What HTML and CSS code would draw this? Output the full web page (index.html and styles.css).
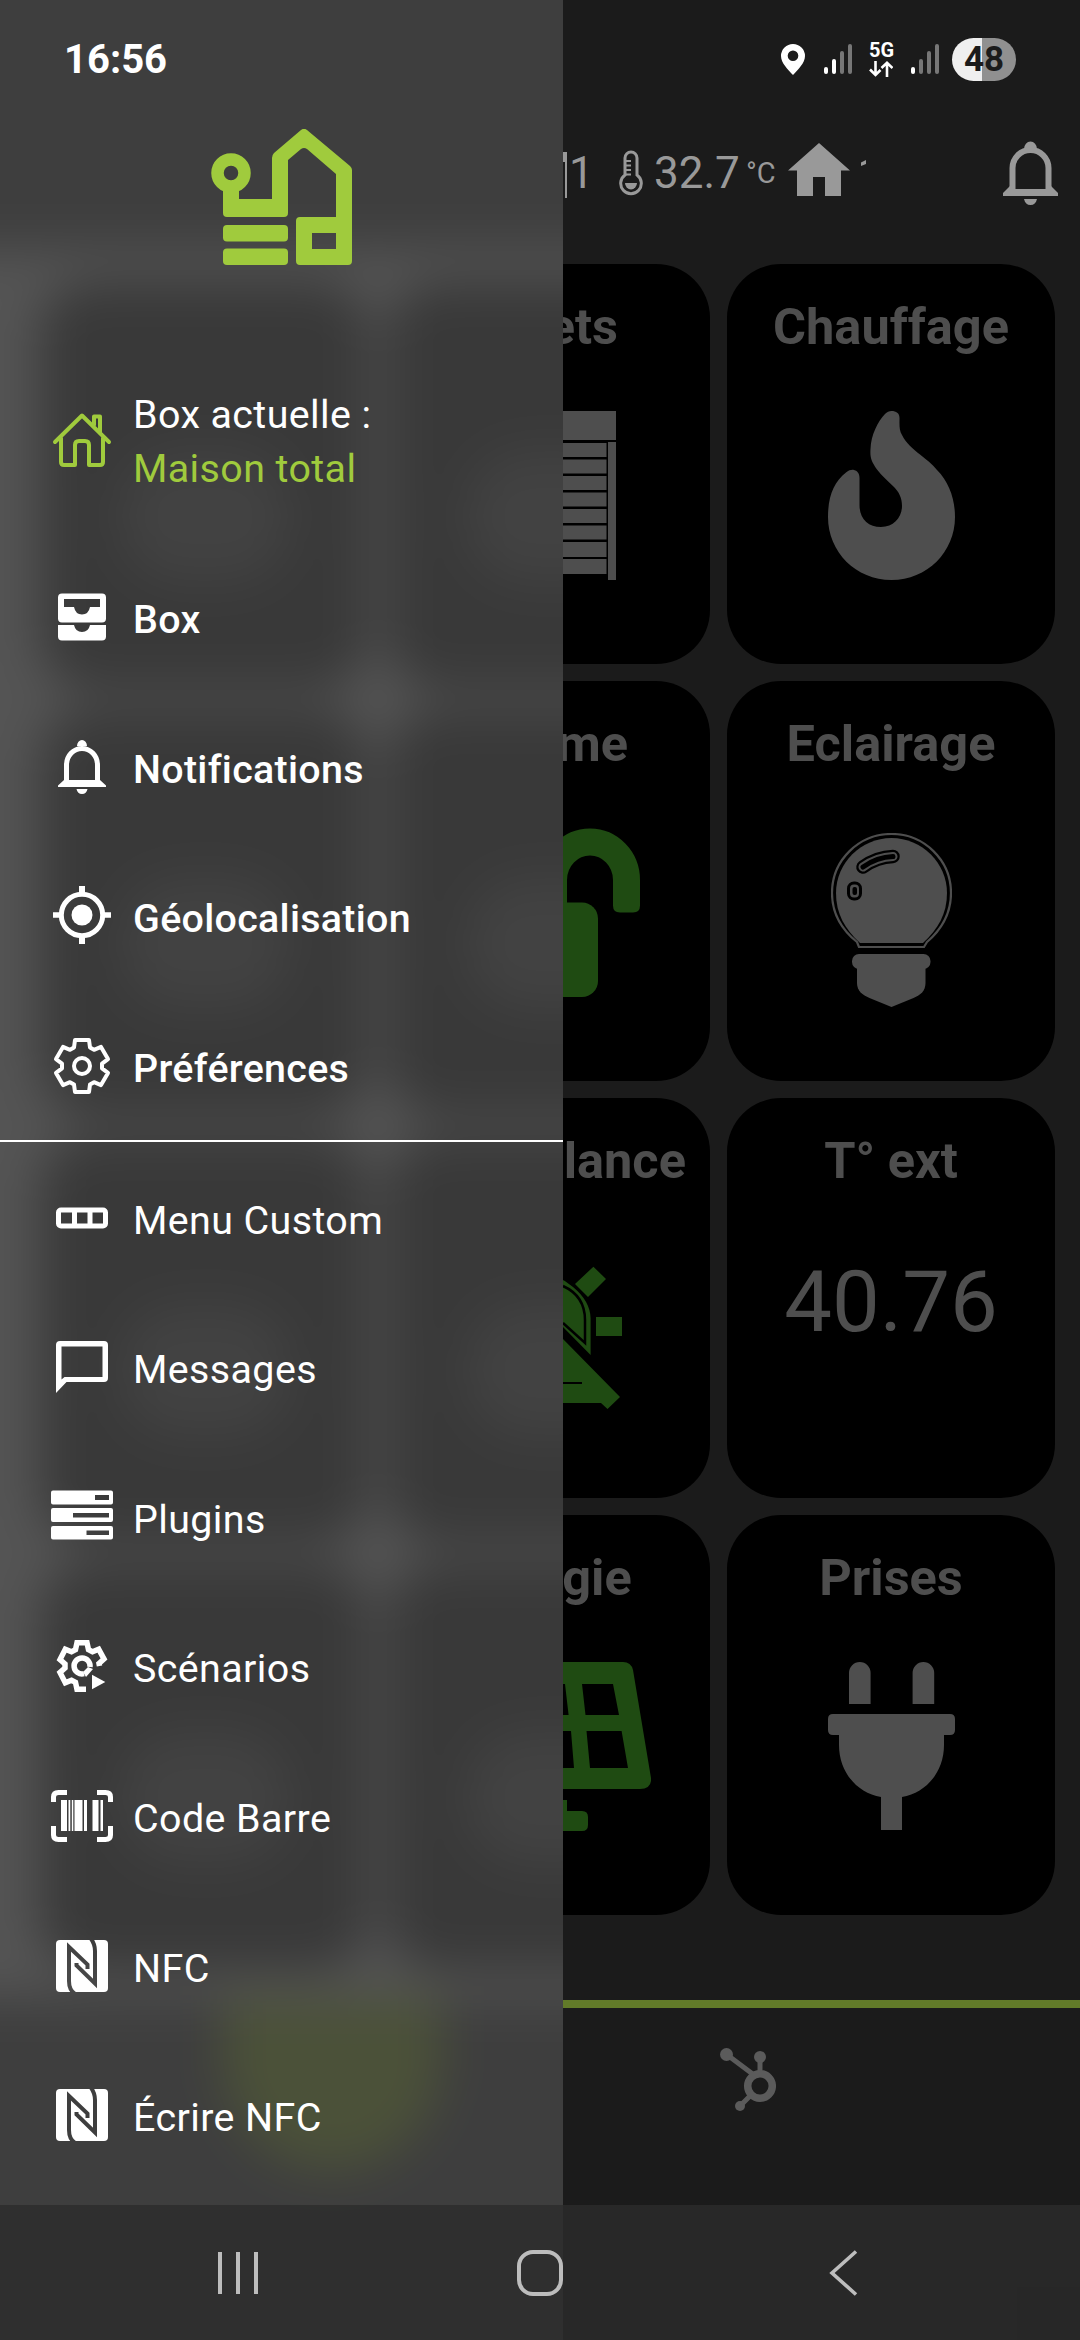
FILE: index.html
```html
<!DOCTYPE html>
<html lang="fr">
<head>
<meta charset="utf-8">
<title>Maison total</title>
<link rel="stylesheet" href="styles.css">
</head>
<body>
<div class="phone">
  <main class="dashboard">
    <header class="topbar">
      <svg class="top-shutter" width="67" height="50" viewBox="0 0 67 50"><path d="M0 2h67v10H0zM65 12h2v36h-2z"/></svg>
      <span class="top-count">1</span>
      <svg class="top-thermo" width="24" height="46" viewBox="0 0 24 46"><path d="M6 25V8a6 6 0 0 1 12 0v17a10.300 10.300 0 1 1-12 0z" fill="none" stroke="currentColor" stroke-width="3"/><path d="M6 11h6M6 15.500h6M6 20h6M6 24.500h6" stroke="currentColor" stroke-width="1.800"/><path d="M6 33h12a6 6.500 0 0 1-12 0z"/></svg>
      <span class="top-temp">32.7</span>
      <span class="top-unit">°C</span>
      <svg class="top-home" width="62" height="53" viewBox="0 0 62 53"><path d="M31 0l31 27.500h-9V53H37V34H25v19H9V27.500H0z"/></svg>
      <svg class="top-mark" width="6" height="6" viewBox="0 0 6 6"><path d="M0 2.500L5 0v4L0 6z"/></svg>
      <svg class="top-bell" width="55" height="64" viewBox="0 0 55 64"><path d="M9.500 49V27a18 18 0 0 1 36 0v22" fill="none" stroke="currentColor" stroke-width="6"/><path d="M21 8a6.500 7.500 0 0 1 13 0zM0 52l8-8 2 4h35l2-4 8 8v3H0zM21 58h13c-1 4-3 6-6.500 6s-5.500-2-6.500-6z"/></svg>
    </header>
    <section class="tiles">
      <article class="tile"></article>
      <article class="tile"><h2>Volets</h2>
        <svg class="tile-icon" width="140" height="169" viewBox="476 412 140 169"><path d="M476 412h140v29H476zM476 443h8v138h-8zM608 443h8v138h-8zM486 444h120.500v14H486zM486 460.500h120.500v14H486zM486 477h120.500v14H486zM486 493.500h120.500v14H486zM486 510h120.500v14H486zM486 526.500h120.500v14H486zM486 543h120.500v15H486zM486 560h120.500v15H486z"/></svg></article>
      <article class="tile"><h2>Chauffage</h2>
        <svg class="tile-icon" width="127" height="169" viewBox="827 411 127 169"><path d="M890.600 411C895 411 898.500 413 898.500 418C898.500 425 898 430 901 435C905 443 912 449 919 454.500C926 460 931 464 936 470C948 482 954 499 954 517C954 552 926 580 890.600 580C855 580 827 552 827 517C827 496 833 482 845 472.500C848 470 851 469.500 853 470C857 471 858.500 474 858.500 478V505C858.500 519 867 527 880 527C893 527 901 517 901 506C901 498 898 492 893 487C887 481 881 476 876 469.500C870 461 869 457 869.500 449C870 435 877 421 884 414C886 412 888 411 890.600 411Z"/></svg></article>

      <article class="tile"></article>
      <article class="tile"><h2>Alarme</h2>
        <svg class="tile-icon on lock" width="188" height="169" viewBox="452 828 188 169"><path d="M553.500 903V880a36.500 38 0 0 1 73 0v20" fill="none" stroke="currentColor" stroke-width="27"/><path d="M613 895h27v10.500q0 7-7 7h-13q-7 0-7-7z"/><rect x="452" y="902.500" width="146" height="94.500" rx="16"/></svg></article>
      <article class="tile"><h2>Eclairage</h2>
        <svg class="tile-icon bulb" width="121" height="174" viewBox="830 833 121 174"><path d="M858 947L856 942C840 929 831 914 831 893C831 860 858 834 890.500 834S950 860 950 893C950 914 941 929 926 942L923 947Z" fill="none" stroke="currentColor" stroke-width="2.200"/><path d="M859 943C844 929 835 914 835 893C835 863 860 838 890.500 838S946 863 946 893C946 914 937 929 922 943Z"/><path d="M862 867Q876 857 892 856.500" fill="none" stroke="#000" stroke-width="13.500" stroke-linecap="round"/><path d="M862 867Q876 857 892 856.500" fill="none" stroke="currentColor" stroke-width="9" stroke-linecap="round"/><path d="M862 867Q876 857 892 856.500" fill="none" stroke="#000" stroke-width="5" stroke-linecap="round"/><rect x="847.500" y="883" width="12" height="16" rx="5.500" fill="currentColor" stroke="#000" stroke-width="3"/><rect x="851.500" y="887" width="4.500" height="8" rx="2" fill="#000"/><rect x="851" y="954" width="78.500" height="15" rx="7"/><path d="M856 960h68.500v23c0 8-5 12-12 15l-22 9-22-9c-7-3-12.500-7-12.500-15z"/></svg></article>

      <article class="tile"></article>
      <article class="tile"><h2>Surveillance</h2>
        <svg class="tile-icon on siren" width="152" height="144" viewBox="470 1266 152 144"><path d="M593.400 1266.700l12.600 12.300-18 18-13-13zM596 1317h26v19h-26zM470 1317h26v19h-26zM498.600 1266.700l-12.600 12.300 18 18 13-13z"/><path d="M563 1339l57 58-12.500 12-6.500-6H502v-30h30l-62-60 14-14 62 63z"/><path d="M515 1283q31-20 58 4q17 14 17.600 31v37L563 1327z"/><path d="M563 1286q22 10 22 34v23l-22-20" fill="none" stroke="#000" stroke-width="2.500"/><path d="M563 1383h19" stroke="#000" stroke-width="2"/></svg></article>
      <article class="tile"><h2>T° ext</h2><p class="reading">40.76</p></article>

      <article class="tile"></article>
      <article class="tile"><h2>Energie</h2>
        <svg class="tile-icon on solar" width="210" height="169" viewBox="441 1662 210 169"><path fill-rule="evenodd" d="M470 1662h153q8 0 10 8l18 108q1 11-11 11H452q-12 0-11-11l18-108q2-8 11-8zM582 1684l3.500 31H619l-6-31zM586.500 1731l3.500 37h38l-6.400-37zM527 1684l-3.600 31h45.200l-3.600-31zM521 1731l-3 37h56l-3-37zM510 1684h-31l-6 31h34zM505.500 1731H470l-6 37h38z"/><path d="M525 1800h42v11h15q6 0 6 6v8q0 6-6 6h-72q-6 0-6-6v-8q0-6 6-6h15z"/></svg></article>
      <article class="tile"><h2>Prises</h2>
        <svg class="tile-icon" width="127" height="168" viewBox="827 1663 127 168"><path d="M848 1705v-31a10.800 11 0 0 1 21.600 0v31zM911.600 1705v-31a10.800 11 0 0 1 21.600 0v31zM832 1715h117q5 0 5 5v11q0 5-5 5h-6v10c0 27-18 48-42 52v33h-21v-33c-24-4-42-25-42-52v-10h-6q-5 0-5-5v-11q0-5 5-5z"/></svg></article>
    </section>
    <footer class="tabbar">
      <svg width="56" height="64" viewBox="0 0 56 64"><path d="M6 6l28 21M40 9v17M32 46L20 58" stroke="currentColor" stroke-width="5"/><circle cx="6.500" cy="6.500" r="6.500"/><circle cx="40" cy="9" r="6"/><circle cx="20" cy="58" r="5"/><circle cx="40" cy="38" r="12.300" fill="none" stroke="currentColor" stroke-width="7.500"/></svg>
    </footer>
  </main>

  <aside class="drawer">
    <div class="haze">
      <div class="haze-head"></div>
      <div class="haze-tiles"><i></i><i></i><i></i><i></i><i></i><i></i><i></i><i></i></div>
      <div class="haze-foot"><b></b></div>
    </div>
    <div class="menu">
      <svg class="logo" width="141" height="136" viewBox="211 129 141 136"><path d="M231 159.500a13.500 13.500 0 1 1 0 27a13.500 13.500 0 1 1 0-27z" fill="none" stroke="currentColor" stroke-width="12.500"/><path d="M223 188h16v11h33v-41q0-3 2-5l27-23q3-2.500 6 0l43 36q2 2 2 4v91q0 4-4 4h-48q-4 0-4-4v-40q0-4 4-4h36v-43l-29-25q-3-2-6 0l-13 11v53q0 4-4 4h-57q-4 0-4-4zM312 233v16h24v-16z" fill-rule="evenodd"/><rect x="223" y="225" width="65" height="16.500" rx="4"/><rect x="223" y="248.500" width="65" height="16.500" rx="4"/></svg>
      <div class="current">
        <svg width="60" height="60" viewBox="52 410 60 60" fill="none" stroke="currentColor" stroke-width="4" stroke-linecap="round" stroke-linejoin="round"><path d="M55 442L82 415.500L109 442M61 438v24q0 3 3 3h11v-20q0-4 4-4h6q4 0 4 4v20h11q3 0 3-3v-24M94 425v-8.500h6V432"/></svg>
        <p>Box actuelle :<br><span class="box-name">Maison total</span></p>
      </div>
      <nav class="group strong">
        <a class="item"><svg width="64" height="64" viewBox="50 584.500 64 64"><path fill-rule="evenodd" d="M62 593h40q4 0 4 4v21q0 4-4 4H62q-4 0-4-4v-21q0-4 4-4zM64 598.500v8h10q1.500 7.500 8 7.500t8-7.500h10v-8z"/><path d="M58 624.500h16q1.500 7 8 7t8-7h16V636q0 4-4 4H62q-4 0-4-4z"/></svg><span>Box</span></a>
        <a class="item"><svg width="64" height="64" viewBox="50 736 64 64"><path d="M66.500 784v-18a15.500 16.500 0 0 1 31 0v18" fill="none" stroke="currentColor" stroke-width="5"/><path d="M77 747a5 6 0 0 1 10 0zM58 786.500l6-5.500h36l6 5.500v1.500H58zM76.500 790h11q-1 5-5.500 5t-5.500-5z"/></svg><span>Notifications</span></a>
        <a class="item"><svg width="64" height="64" viewBox="50 885 64 64"><path d="M79 887h6v8h-6zM79 937h6v8h-6zM53 913.200h8v5.600h-8zM103 913.200h8v5.600h-8z"/><circle cx="82" cy="916" r="20.700" fill="none" stroke="currentColor" stroke-width="5"/><circle cx="82" cy="916" r="10.500"/></svg><span>Géolocalisation</span></a>
        <a class="item"><svg width="64" height="64" viewBox="-32 -32 64 64" fill="none" stroke="currentColor" stroke-width="4" stroke-linejoin="round"><path d="M-7-26L7-26L8-18.500L12-16.200L19-19.100L26-6.900L20-2.300L20 2.300L26 6.900L19 19.100L12 16.200L8 18.500L7 26L-7 26L-8 18.500L-12 16.200L-19 19.100L-26 6.900L-20 2.300L-20-2.300L-26-6.900L-19-19.100L-12-16.200L-8-18.500Z"/><circle r="8"/></svg><span>Préférences</span></a>
      </nav>
      <hr class="divider">
      <nav class="group">
        <a class="item"><svg width="64" height="64" viewBox="50 1185.500 64 64" fill="none" stroke="currentColor" stroke-width="5"><rect x="58.500" y="1209.500" width="47" height="16" rx="2.500"/><path d="M74.500 1209v17M90 1209v17"/></svg><span>Menu Custom</span></a>
        <a class="item"><svg width="64" height="64" viewBox="50 1336 64 64"><path fill-rule="evenodd" d="M60 1342h44q4 0 4 4v33q0 4-4 4H66.500L56 1394v-48q0-4 4-4zM61.500 1347.500v33l3-2.500h38v-30.500z"/></svg><span>Messages</span></a>
        <a class="item"><svg width="64" height="64" viewBox="50 1484.500 64 64"><path fill-rule="evenodd" d="M53 1490h58q2 0 2 2v10q0 2-2 2H53q-2 0-2-2v-10q0-2 2-2zM95 1494.500v5h14v-5zM53 1507.500h58q2 0 2 2v10q0 2-2 2H53q-2 0-2-2v-10q0-2 2-2zM73 1512.500v4.500h36v-4.500zM53 1525.500h58q2 0 2 2v9.500q0 2-2 2H53q-2 0-2-2v-9.500q0-2 2-2zM86.500 1530v4.500H109v-4.500z"/></svg><span>Plugins</span></a>
        <a class="item"><svg width="64" height="64" viewBox="-32 -32 64 64"><g fill="none" stroke="currentColor" stroke-width="5.500"><path d="M4 23.300L-5 23.300L-6.500 16.300L-10.500 14.300L-16.700 16.800L-22 6.500L-17 2L-17-2L-22-6.500L-16.700-16.800L-10.500-14.300L-6.500-16.300L-5-23.300L5-23.300L6.500-16.300L10.500-14.300L16.700-16.800L22-7L17-2.500L17.500 0"/><path d="M8 1A8 8 0 1 0 2 7.700"/></g><path d="M4 11L11 3L6 1L1 6zM10 8.700L23.300 16L10 23.300z"/></svg><span>Scénarios</span></a>
        <a class="item"><svg width="64" height="64" viewBox="50 1785 64 64"><path d="M53.500 1803v-5q0-4.500 5-4.500H67M97 1793.500h8.500q5 0 5 4.500v5M110.500 1827v9q0 4.500-5 4.500H97M67 1840.500h-8.500q-5 0-5-4.500v-9" fill="none" stroke="currentColor" stroke-width="5"/><path d="M61 1801h6v31h-6zM68.500 1801h1.800v31h-1.800zM71.800 1801h1.500v31h-1.500zM74.500 1801h8v31h-8zM84 1801h3v31h-3zM92.500 1801h6v31h-6zM100.500 1801h2.500v31h-2.500z"/></svg><span>Code Barre</span></a>
        <a class="item"><svg width="64" height="64" viewBox="-6 -6 64 64"><defs><mask id="nfc"><rect width="52" height="52" rx="4" fill="#fff"/><path d="M19 54Q13 50 13 41V7L31.500 24.500V29M20.500 23V25.500L39 43.500V11Q39 4 34.500-2" fill="none" stroke="#000" stroke-width="4"/></mask></defs><rect width="52" height="52" mask="url(#nfc)"/></svg><span>NFC</span></a>
        <a class="item"><svg width="64" height="64" viewBox="-6 -6 64 64"><rect width="52" height="52" mask="url(#nfc)"/></svg><span>Écrire NFC</span></a>
      </nav>
    </div>
  </aside>

  <div class="status">
    <span class="clock">16:56</span>
    <svg class="pin" width="24" height="31" viewBox="0 0 24 31"><path fill-rule="evenodd" d="M12 0a12 12 0 0 1 12 12c0 7-7 13.500-12 19C7 25.500 0 19 0 12A12 12 0 0 1 12 0zM12 6.500a5.300 5.300 0 1 0 0 10.600a5.300 5.300 0 1 0 0-10.600z"/></svg>
    <svg class="signal" width="28" height="30" viewBox="0 0 28 30"><rect y="23" width="4" height="7" rx="2"/><rect x="8" y="15" width="4" height="15" rx="2"/><g fill="#777"><rect x="16" y="7" width="4" height="23" rx="2"/><rect x="24" width="4" height="30" rx="2"/></g></svg>
    <span class="net"><span>5G</span><svg width="24" height="16" viewBox="0 0 24 16" fill="none" stroke="currentColor" stroke-width="2.600"><path d="M6.500 0v14M1 8.500l5.500 5.500 5-5M18 16V2M12.500 7L18 1.800 23.500 7"/></svg></span>
    <svg class="signal" width="28" height="30" viewBox="0 0 28 30"><rect y="23" width="4" height="7" rx="2"/><g fill="#777"><rect x="8" y="15" width="4" height="15" rx="2"/><rect x="16" y="7" width="4" height="23" rx="2"/><rect x="24" width="4" height="30" rx="2"/></g></svg>
    <span class="battery">48</span>
  </div>

  <div class="navbar">
    <svg width="40" height="42" viewBox="0 0 40 42"><path d="M2 0v42M20 0v42M38 0v42" stroke="currentColor" stroke-width="4"/></svg>
    <svg width="46" height="46" viewBox="0 0 46 46"><rect x="2" y="2" width="42" height="42" rx="14" fill="none" stroke="currentColor" stroke-width="4"/></svg>
    <svg width="30" height="46" viewBox="0 0 30 46"><path d="M27 1.500L3 23L27 44.500" fill="none" stroke="currentColor" stroke-width="3.600"/></svg>
  </div>
</div>
</body>
</html>
```
FILE: styles.css
```css
* { box-sizing: border-box; }
body { margin: 0; background: #1b1b1b; font-family: Roboto, "Liberation Sans", sans-serif; }
h2, p { margin: 0; }
svg { display: block; flex: none; fill: currentColor; }
svg[fill="none"] { fill: none; }

.phone { position: relative; width: 1080px; height: 2340px; overflow: hidden; }

/* Dashboard behind the drawer */
.dashboard { display: flex; flex-direction: column; height: 2340px; background: #1b1b1b; color: #4e4e4e; }
.topbar { display: flex; align-items: flex-start; height: 264px; padding: 128px 22px 0 500px; color: #999; font-size: 44px; line-height: 90px; }
.top-shutter { margin-top: 22px; }
.top-count { width: 52px; padding-left: 2px; }
.top-thermo { margin-top: 22px; }
.top-temp { width: 93px; padding-left: 11px; white-space: nowrap; }
.top-unit { width: 52px; padding-left: 10px; font-size: 29px; line-height: 91px; white-space: nowrap; }
.top-home { margin-top: 15px; }
.top-mark { margin: 32px 0 0 11px; }
.top-bell { margin: 13px 0 0 auto; }

.tiles { display: grid; grid-template-columns: repeat(3, 328px); grid-auto-rows: 400px; gap: 17px; padding-left: 37px; height: 1736px; }
.tile { display: flex; flex-direction: column; align-items: center; border-radius: 54px; background: #000; }
.tile h2 { height: 147px; padding-top: 33px; font-size: 50.5px; font-weight: 700; line-height: 60px; white-space: nowrap; }
.on { color: #1f4b12; }
.bulb { margin-top: 5px; }
.siren { margin-top: 21px; }
.reading { font-size: 85px; line-height: 100px; margin-top: 7px; }

.tabbar { height: 340px; padding: 40px 0 0 720px; border-top: 8px solid #627a29; color: #5b5b5b; }

/* Drawer */
.drawer { position: absolute; inset: 0 auto 0 0; width: 563px; overflow: hidden; background: #3e3e3e; color: #fff; }
.haze { position: absolute; inset: -80px -260px 0 -80px; display: flex; flex-direction: column; background: #545454; filter: blur(24px); }
.haze-head { height: 328px; background: #3e3e3e; }
.haze-tiles { display: grid; grid-template-columns: 329px 329px; grid-auto-rows: 409px; gap: 18px; padding: 33px 0 0 120px; height: 1750px; }
.haze-tiles i { display: grid; place-items: center; border-radius: 54px; background: #393939; }
.haze-tiles i::after { content: ""; width: 170px; height: 130px; margin-top: 60px; border-radius: 60px; background: #424242; }
.haze-foot { flex: 1; padding-left: 303px; background: #3e3e3e; }
.haze-foot b { display: block; width: 218px; height: 172px; border-radius: 0 0 109px 109px; background: #4b5139; }

.menu { position: relative; display: flex; flex-direction: column; padding-top: 129px; font-size: 39.4px; letter-spacing: 0.4px; }
.logo { margin-left: 211px; color: #a0cb3d; }
.current { display: flex; align-items: center; gap: 21px; height: 108px; margin: 123px 0 49px; padding-left: 52px; line-height: 54px; }
.current svg { color: #a0cb3d; margin-top: -4px; }
.box-name { color: #a0cb3d; }
.item { display: flex; align-items: center; gap: 19px; height: 149.600px; padding-left: 50px; white-space: nowrap; }
.item svg { margin-top: -5px; }
.strong { font-weight: 500; letter-spacing: 0.3px; }
.divider { width: 100%; height: 2px; margin: -3px 0 3px; border: 0; background: #fff; }

/* System bars */
.status { position: absolute; inset: 0 0 auto 0; display: flex; align-items: flex-start; height: 118px; padding: 0 64px 0 64px; color: #fff; }
.clock { margin: 36px auto 0 0; font-size: 40px; font-weight: 700; line-height: 47px; }
.pin { margin-top: 44px; }
.signal { margin: 44px 17px 0 19px; }
.net { display: flex; flex-direction: column; width: 25px; margin-top: 40px; font-size: 20px; font-weight: 700; line-height: 21px; }
.net + .signal { margin-left: 17px; margin-right: 13px; }
.battery { width: 64px; height: 43px; margin-top: 38px; border-radius: 22px; background: linear-gradient(90deg, #efefef 30px, #909090 30px); color: #1b1b1b; font-size: 35px; font-weight: 700; line-height: 43px; text-align: center; }
.navbar { position: absolute; inset: auto 0 0 0; display: grid; grid-template-columns: 299px 312px 1fr; align-items: center; height: 135px; padding-left: 218px; background: rgba(43, 43, 43, 0.78); color: #bdbdbd; }
```
